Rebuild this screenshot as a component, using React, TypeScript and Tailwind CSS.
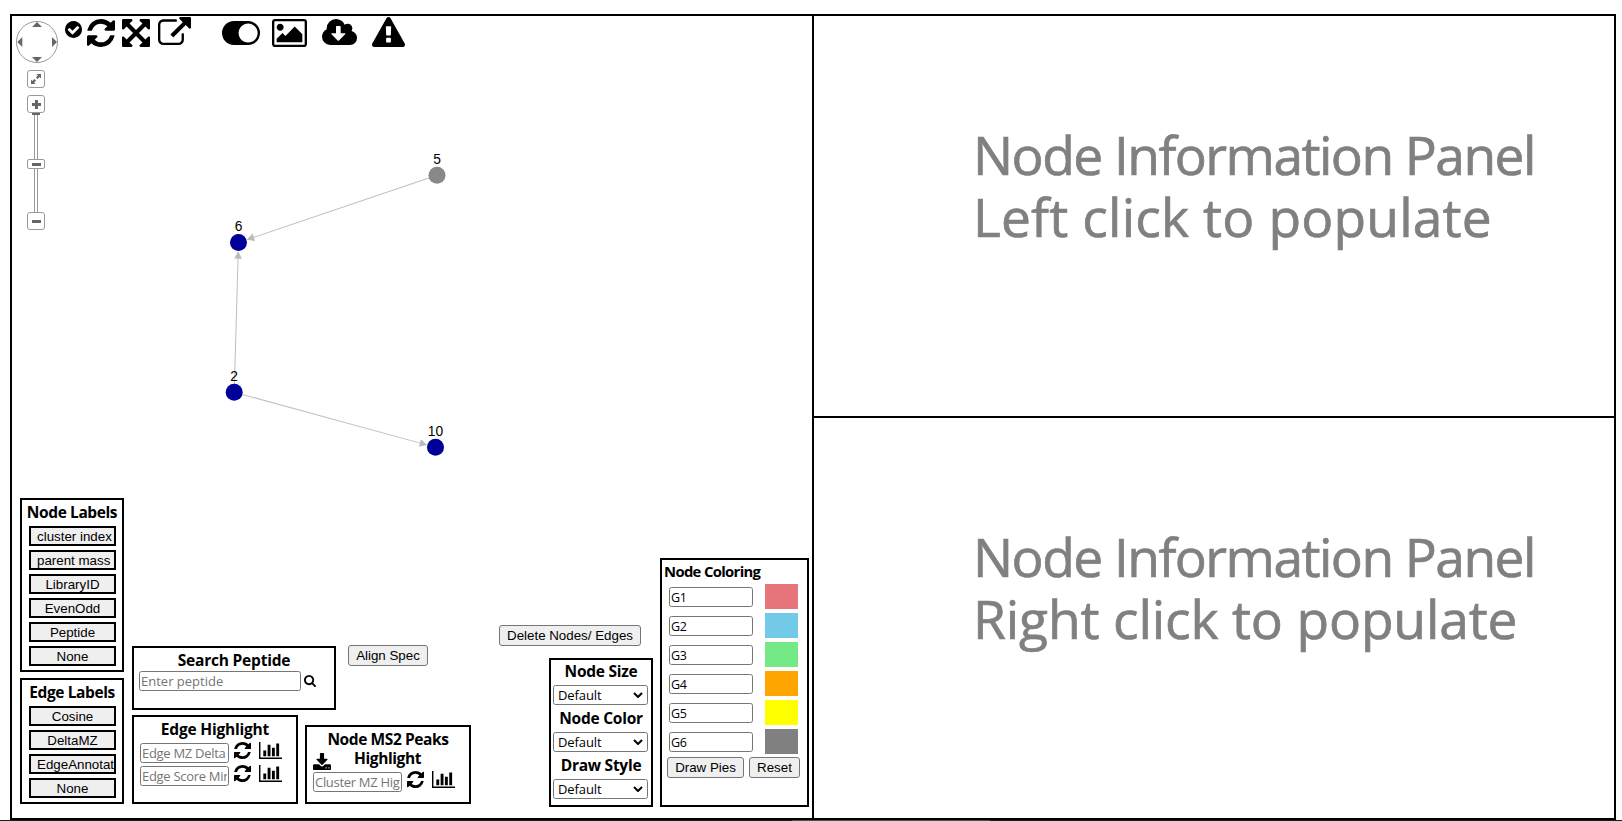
import React from "react";

type IconName =
  | "check"
  | "refresh"
  | "expand"
  | "external"
  | "toggle"
  | "picture"
  | "cloud"
  | "warning"
  | "chart"
  | "search"
  | "download";

const icons: Record<IconName, { box: string; d: string }> = {
  check: {
    box: "0 0 1536 1536",
    d: "M1284 606q0-28-18-46l-91-90q-19-19-45-19t-45 19L677 877 451 651q-19-19-45-19t-45 19l-91 90q-18 18-18 46 0 27 18 45l362 362q19 19 45 19 27 0 46-19l543-543q18-18 18-45zm252 162q0 209-103 385.5T1153.5 1433 768 1536t-385.5-103T103 1153.5 0 768t103-385.5T382.5 103 768 0t385.5 103T1433 382.5 1536 768z",
  },
  refresh: {
    box: "0 0 1536 1536",
    d: "M1511 928q0 5-1 7-64 268-268 434.5T764 1536q-146 0-282.5-55T238 1324l-129 129q-19 19-45 19t-45-19-19-45V960q0-26 19-45t45-19h448q26 0 45 19t19 45-19 45l-137 137q71 66 161 102t187 36q134 0 250-65t186-179q11-17 53-117 8-23 30-23h192q13 0 22.5 9.5t9.5 22.5zm25-800v448q0 26-19 45t-45 19h-448q-26 0-45-19t-19-45 19-45l138-138Q969 256 768 256q-134 0-250 65T332 500q-11 17-53 117-8 23-30 23H50q-13 0-22.5-9.5T18 608v-7q65-268 270-434.5T768 0q146 0 284 55.5T1297 212l130-129q19-19 45-19t45 19 19 45z",
  },
  expand: {
    box: "0 0 1536 1536",
    d: "M1283 413L928 768l355 355 144-144q29-31 70-14 39 17 39 59v448q0 26-19 45t-45 19h-448q-42 0-59-40-17-39 14-69l144-144-355-355-355 355 144 144q31 30 14 69-17 40-59 40H64q-26 0-45-19t-19-45v-448q0-42 40-59 39-17 69 14l144 144 355-355-355-355-144 144q-19 19-45 19-12 0-24-5-40-17-40-59V64q0-26 19-45T64 0h448q42 0 59 40 17 39-14 69L413 253l355 355 355-355-144-144q-31-30-14-69 17-40 59-40h448q26 0 45 19t19 45v448q0 42-39 59-13 5-25 5-26 0-45-19z",
  },
  external: {
    box: "0 0 1792 1536",
    d: "M1408 928v320q0 119-84.5 203.5T1120 1536H288q-119 0-203.5-84.5T0 1248V416q0-119 84.5-203.5T288 128h704q14 0 23 9t9 23v64q0 14-9 23t-23 9H288q-66 0-113 47t-47 113v832q0 66 47 113t113 47h832q66 0 113-47t47-113V928q0-14 9-23t23-9h64q14 0 23 9t9 23zm384-864v512q0 26-19 45t-45 19-45-19l-176-176-652 652q-10 10-23 10t-23-10L695 983q-10-10-10-23t10-23l652-652-176-176q-19-19-19-45t19-45 45-19h512q26 0 45 19t19 45z",
  },
  toggle: {
    box: "0 128 2048 1280",
    d: "M0 768q0-130 51-248.5t136.5-204T391.5 179 640 128h768q130 0 248.5 51t204 136.5 136.5 204 51 248.5-51 248.5-136.5 204-204 136.5-248.5 51H640q-130 0-248.5-51T187.5 1221 51 1016.5 0 768zm1408 512q104 0 198.5-40.5T1770 1130t109.5-163.5T1920 768t-40.5-198.5T1770 406t-163.5-109.5T1408 256t-198.5 40.5T1046 406 936.5 569.5 896 768t40.5 198.5T1046 1130t163.5 109.5T1408 1280z",
  },
  picture: {
    box: "0 0 1920 1536",
    d: "M640 448q0 80-56 136t-136 56-136-56-56-136 56-136 136-56 136 56 56 136zm1024 384v448H256v-192l320-320 160 160 512-512zm96-704H160q-13 0-22.5 9.5T128 160v1216q0 13 9.5 22.5t22.5 9.5h1600q13 0 22.5-9.5t9.5-22.5V160q0-13-9.5-22.5T1760 128zm160 32v1216q0 66-47 113t-113 47H160q-66 0-113-47T0 1376V160Q0 94 47 47T160 0h1600q66 0 113 47t47 113z",
  },
  cloud: {
    box: "0 0 1920 1408",
    d: "M1280 800q0-14-9-23t-23-9h-224V416q0-13-9.5-22.5T992 384H800q-13 0-22.5 9.5T768 416v352H544q-13 0-22.5 9.5T512 800q0 14 9 23l352 352q9 9 23 9t23-9l351-351q10-12 10-24zm640 224q0 159-112.5 271.5T1536 1408H448q-185 0-316.5-131.5T0 960q0-130 70-240t188-165q-2-30-2-43 0-212 150-362T768 0q156 0 285.5 87T1242 318q71-62 166-62 106 0 181 75t75 181q0 76-41 138 130 31 213.5 135.5T1920 1024z",
  },
  warning: {
    box: "0 0 1792 1664",
    d: "M1024 1375v-190q0-14-9.5-23.5T992 1152H800q-13 0-22.5 9.5T768 1185v190q0 14 9.5 23.5T800 1408h192q13 0 22.5-9.5t9.5-23.5zm-2-374l18-459q0-12-10-19-13-11-24-11H786q-11 0-24 11-10 7-10 21l17 457q0 10 10 16.5t24 6.5h185q14 0 23.5-6.5t10.5-16.5zm-14-934l768 1408q35 63-2 126-17 29-46.5 46t-63.5 17H128q-34 0-63.5-17T18 1601q-37-63-2-126L784 67q17-31 47-49t65-18 65 18 47 49z",
  },
  chart: {
    box: "0 0 2048 1536",
    d: "M640 768v512H384V768h256zm384-512v1024H768V256h256zm1024 1152v128H0V0h128v1408h1920zm-640-896v768h-256V512h256zm384-384v1152h-256V128h256z",
  },
  search: {
    box: "0 0 1664 1664",
    d: "M1152 704q0-185-131.5-316.5T704 256 387.5 387.5 256 704t131.5 316.5T704 1152t316.5-131.5T1152 704zm512 832q0 52-38 90t-90 38q-54 0-90-38l-343-342q-179 124-399 124-143 0-273.5-55.5t-225-150-150-225T0 704t55.5-273.5 150-225 225-150T704 0t273.5 55.5 225 150 150 225T1408 704q0 220-124 399l343 343q37 37 37 90z",
  },
  download: {
    box: "0 0 1664 1536",
    d: "M1280 1344q0-26-19-45t-45-19-45 19-19 45 19 45 45 19 45-19 19-45zm256 0q0-26-19-45t-45-19-45 19-19 45 19 45 45 19 45-19 19-45zm128-224v320q0 40-28 68t-68 28H96q-40 0-68-28t-28-68v-320q0-40 28-68t68-28h465l135 136q58 56 136 56t136-56l136-136h464q40 0 68 28t28 68zm-325-569q17 41-14 70l-448 448q-18 19-45 19t-45-19L339 621q-31-29-14-70 17-39 59-39h256V64q0-26 19-45t45-19h256q26 0 45 19t19 45v448h256q42 0 59 39z",
  },
};

function Icon({ name, className }: { name: IconName; className: string }) {
  const { box, d } = icons[name];
  return (
    <svg viewBox={box} preserveAspectRatio="none" fill="currentColor" className={`shrink-0 ${className}`}>
      <path d={d} />
    </svg>
  );
}

const sans = "font-['Open_Sans','Noto_Sans',sans-serif]";
const arial = "font-['Liberation_Sans',Arial,sans-serif]";

function Title({
  children,
  className = "",
  tracking = "tracking-[-0.4px]",
}: {
  children: React.ReactNode;
  className?: string;
  tracking?: string;
}) {
  return (
    <div className={`whitespace-nowrap text-center text-[15.5px] font-bold leading-[19px] ${tracking} ${className}`}>
      {children}
    </div>
  );
}

function Box({ children, className }: { children: React.ReactNode; className: string }) {
  return <div className={`shrink-0 border-2 border-black bg-white ${className}`}>{children}</div>;
}

function LabelBox({ title, items }: { title: string; items: string[] }) {
  return (
    <Box className="w-[104px] px-[7px] pt-[3px] pb-1">
      <Title className="-mx-[7px]">{title}</Title>
      <div className="mt-1 flex flex-col gap-1">
        {items.map((item) => (
          <button
            key={item}
            className={`h-5 w-[87px] overflow-hidden whitespace-nowrap border-2 border-black bg-[#efefef] px-1.5 pt-px text-[13.333px] leading-[15px] ${arial}`}
          >
            {item}
          </button>
        ))}
      </div>
    </Box>
  );
}

function PushButton({ children, className }: { children: React.ReactNode; className: string }) {
  return (
    <button
      className={`h-[21px] shrink-0 whitespace-nowrap rounded-[3px] border border-[#767676] bg-[#efefef] text-[13.333px] leading-[19px] ${arial} ${className}`}
    >
      {children}
    </button>
  );
}

function Field({ className, ...rest }: React.InputHTMLAttributes<HTMLInputElement>) {
  return (
    <input
      className={`h-5 shrink-0 rounded-[2.5px] border border-[#767676] bg-white px-px leading-[18px] placeholder:text-[#757575] ${className}`}
      {...rest}
    />
  );
}

function Dropdown({ title }: { title: string }) {
  return (
    <div className="h-[47px]">
      <Title className="pt-0.5" tracking="tracking-[-0.25px]">
        {title}
      </Title>
      <div className="ml-0.5 mt-1 flex h-5 w-[95px] items-center justify-between rounded-[2.5px] border border-[#767676] pl-1 pr-1">
        <span className="pt-px text-[13px] leading-[17px] tracking-[-0.1px]">Default</span>
        <svg viewBox="0 0 10 6" className="h-1.5 w-2.5" fill="none" stroke="black" strokeWidth="2">
          <path d="M1 1l4 4 4-4" />
        </svg>
      </div>
    </div>
  );
}

function NavControls() {
  const square = "flex h-[18px] w-[18px] items-center justify-center rounded-[3px] border border-[#999] bg-white";
  return (
    <div className="flex w-[53px] shrink-0 flex-col pl-1 pt-[5px]">
      <svg viewBox="0 0 42 42" className="h-[42px] w-[42px]">
        <circle cx="21" cy="21" r="20.5" fill="white" stroke="#999" />
        <path fill="#666" d="M21 1l5 5H16zM21 41l5-5H16zM1.300 21l5-5v10zM41 21l-5-5v10z" />
      </svg>
      <div className={`ml-[11px] mt-[7px] ${square}`}>
        <svg viewBox="0 0 10 10" className="h-2.5 w-2.5" fill="#666">
          <path d="M5.500 0H10v4.500L8.600 3.100 6.600 5.100 4.900 3.400 6.900 1.400zM4.500 10H0V5.500l1.400 1.400 2-2 1.700 1.700-2 2z" />
        </svg>
      </div>
      <div className={`ml-[11px] mt-[7px] ${square}`}>
        <svg viewBox="0 0 9 9" className="h-[9px] w-[9px]" fill="#666">
          <path d="M3 0h3v3h3v3H6v3H3V6H0V3h3z" />
        </svg>
      </div>
      <div className="ml-4 h-0.5 w-2 bg-[#666]" />
      <div className="ml-[18px] h-11 w-1 border-x border-[#999]" />
      <div className="ml-[11px] flex h-2.5 w-[18px] items-center justify-center rounded-[2px] border border-[#999]">
        <div className="h-[3px] w-[9px] bg-[#666]" />
      </div>
      <div className="ml-[18px] h-[43px] w-1 border-x border-[#999]" />
      <div className={`ml-[11px] ${square}`}>
        <div className="h-[3px] w-[9px] bg-[#666]" />
      </div>
    </div>
  );
}

const nodes = [
  { id: "5", x: 425, y: 159.3, fill: "#888888" },
  { id: "6", x: 226.5, y: 226.5, fill: "#000099" },
  { id: "2", x: 222.2, y: 376.2, fill: "#000099" },
  { id: "10", x: 423.5, y: 431.3, fill: "#000099" },
];
const edges = [
  [0, 1],
  [2, 1],
  [2, 3],
];

function Graph() {
  return (
    <svg viewBox="0 0 800 802" className="absolute inset-0 h-[802px] w-[800px]">
      {edges.map(([from, to]) => {
        const a = nodes[from];
        const b = nodes[to];
        const angle = (Math.atan2(b.y - a.y, b.x - a.x) * 180) / Math.PI;
        const length = Math.hypot(b.x - a.x, b.y - a.y);
        return (
          <g key={`${from}-${to}`} transform={`translate(${a.x} ${a.y}) rotate(${angle})`}>
            <line x2={length - 12} stroke="#c0c0c0" strokeWidth="1" />
            <path d={`M${length - 8.7} 0l-7.500 -3.900v7.800z`} fill="#bbbbbb" />
          </g>
        );
      })}
      {nodes.map((n) => (
        <g key={n.id}>
          <circle cx={n.x} cy={n.y} r="8.500" fill={n.fill} />
          <text x={n.x} y={n.y - 11.3} textAnchor="middle" className={`text-[13.8px] ${arial}`}>
            {n.id}
          </text>
        </g>
      ))}
    </svg>
  );
}

function HighlightRow({ placeholder }: { placeholder: string }) {
  return (
    <div className="flex items-start">
      <Field placeholder={placeholder} className="w-[89px] text-[13px] tracking-[-0.3px]" />
      <Icon name="refresh" className="ml-[5px] -mt-px h-[17px] w-[17px]" />
      <Icon name="chart" className="ml-2 -mt-px h-[17px] w-[23px]" />
    </div>
  );
}

const groups = [
  { name: "G1", color: "bg-[#e8757b]" },
  { name: "G2", color: "bg-[#73cae8]" },
  { name: "G3", color: "bg-[#75e985]" },
  { name: "G4", color: "bg-[#ffa500]" },
  { name: "G5", color: "bg-[#ffff00]" },
  { name: "G6", color: "bg-[#808080]" },
];

function InfoPanel({ children }: { children: React.ReactNode }) {
  return (
    <div className="pl-[159px] pt-[108px] text-[53.333px] leading-[62px] text-[#808080] [-webkit-text-stroke:0.7px_#808080]">
      <div className="whitespace-nowrap tracking-[-1.55px]">Node Information Panel</div>
      {children}
    </div>
  );
}

export default function App() {
  return (
    <div className={`flex h-[821px] w-[1622px] flex-col overflow-hidden bg-white pt-[14px] text-black ${sans}`}>
      <div className="ml-[10px] flex h-[806px] w-[1606px] shrink-0 border-2 border-black">
        <div className="relative flex w-[800px] shrink-0 flex-col justify-between">
          <Graph />
          <div className="relative flex items-start">
            <NavControls />
            <Icon name="check" className="mt-[5px] h-[17px] w-[17px]" />
            <Icon name="refresh" className="ml-[5px] mt-[3px] h-7 w-7" />
            <Icon name="expand" className="ml-[7px] mt-[3px] h-7 w-7" />
            <Icon name="external" className="ml-2 mt-px h-7 w-[33px]" />
            <Icon name="toggle" className="ml-[31px] mt-[5px] h-6 w-[38px]" />
            <Icon name="picture" className="ml-3 mt-[3px] h-7 w-[35px]" />
            <Icon name="cloud" className="ml-[15px] mt-[3px] h-[26px] w-[35px]" />
            <Icon name="warning" className="ml-[15px] mt-px h-[30px] w-[33px]" />
          </div>

          <div className="relative flex items-end pb-[11px] pl-2">
            <div className="mb-[3px] flex flex-col gap-1.5">
              <LabelBox
                title="Node Labels"
                items={["cluster index", "parent mass", "LibraryID", "EvenOdd", "Peptide", "None"]}
              />
              <LabelBox title="Edge Labels" items={["Cosine", "DeltaMZ", "EdgeAnnotation", "None"]} />
            </div>

            <div className="mb-[3px] ml-2 flex w-[339px] flex-col gap-[5px]">
              <div className="flex items-start">
                <Box className="h-16 w-[204px] pl-[5px] pt-[3px]">
                  <Title className="-ml-[5px]" tracking="tracking-[-0.2px]">
                    Search Peptide
                  </Title>
                  <div className="mt-px flex items-center">
                    <Field placeholder="Enter peptide" className="w-[162px] text-[13px]" />
                    <Icon name="search" className="ml-[3px] h-3 w-3" />
                  </div>
                </Box>
                <PushButton className="-mt-px ml-3 w-20">Align Spec</PushButton>
              </div>
              <div className="flex items-end gap-[7px]">
                <Box className="h-[89px] w-[166px] pl-1.5 pt-[3px]">
                  <Title className="-ml-1.5" tracking="tracking-[-0.2px]">
                    Edge Highlight
                  </Title>
                  <div className="mt-1 flex flex-col gap-[3px]">
                    <HighlightRow placeholder="Edge MZ Delta" />
                    <HighlightRow placeholder="Edge Score Minimum" />
                  </div>
                </Box>
                <Box className="h-[79px] w-[166px] pl-1.5 pt-[3px]">
                  <Title className="-ml-1.5">Node MS2 Peaks</Title>
                  <div className="flex">
                    <Icon name="download" className="mt-1 h-[17px] w-[18px]" />
                    <Title className="ml-[23px]">Highlight</Title>
                  </div>
                  <div className="mt-0.5">
                    <HighlightRow placeholder="Cluster MZ Highlight" />
                  </div>
                </Box>
              </div>
            </div>

            <div className="ml-7 flex w-[154px] flex-col items-end gap-3">
              <PushButton className="mr-3 w-[142px]">Delete Nodes/ Edges</PushButton>
              <Box className="h-[149px] w-[104px]">
                <Dropdown title="Node Size" />
                <Dropdown title="Node Color" />
                <Dropdown title="Draw Style" />
              </Box>
            </div>

            <Box className="ml-[7px] h-[249px] w-[149px] pt-0.5">
              <div className="whitespace-nowrap pl-0.5 text-[14.8px] font-bold leading-[19px] tracking-[-0.65px]">
                Node Coloring
              </div>
              <div className="mt-[3px] flex flex-col gap-1 pl-[7px]">
                {groups.map((g) => (
                  <div key={g.name} className="flex h-[25px] items-center">
                    <Field defaultValue={g.name} className="mt-px w-[84px] text-[12.5px] tracking-[-0.3px]" />
                    <div className={`ml-3 h-[25px] w-[33px] ${g.color}`} />
                  </div>
                ))}
              </div>
              <div className="mt-[3px] flex gap-[5px] pl-[5px]">
                <PushButton className="w-[77px]">Draw Pies</PushButton>
                <PushButton className="w-[51px]">Reset</PushButton>
              </div>
            </Box>
          </div>
        </div>

        <div className="flex grow flex-col border-l-2 border-black">
          <div className="h-[402px] border-b-2 border-black">
            <InfoPanel>
              <div className="whitespace-nowrap tracking-[0.15px]">Left click to populate</div>
            </InfoPanel>
          </div>
          <div className="h-[400px]">
            <InfoPanel>
              <div className="whitespace-nowrap tracking-[-0.15px]">Right click to populate</div>
            </InfoPanel>
          </div>
        </div>
      </div>
      <div className="flex h-px bg-[#1a1c22]">
        <div className="ml-[792px] w-[198px] bg-[#4a4f57]" />
      </div>
    </div>
  );
}
